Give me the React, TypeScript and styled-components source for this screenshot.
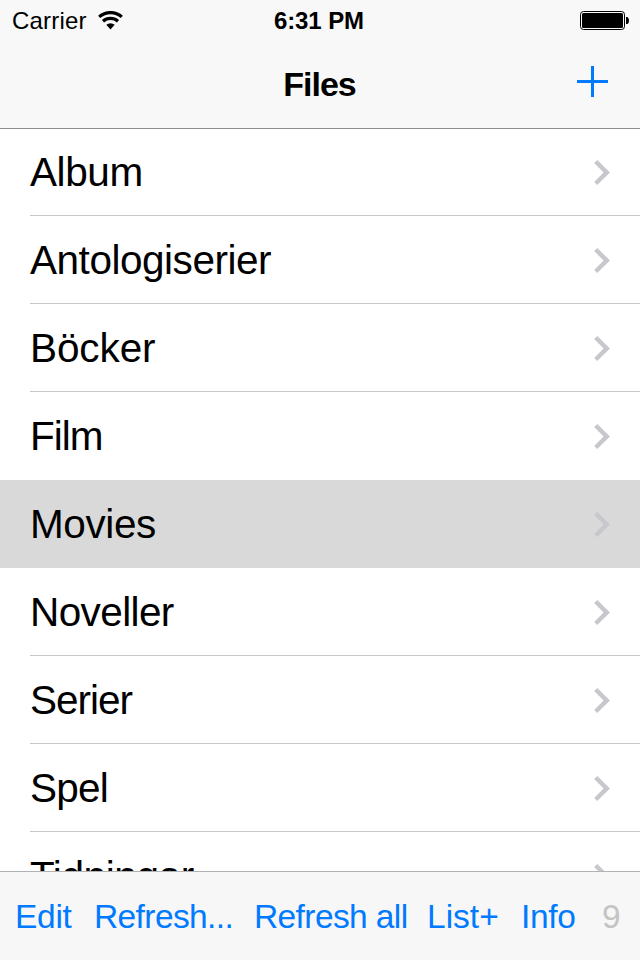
import React from "react";
import styled, { createGlobalStyle } from "styled-components";

const Global = createGlobalStyle`
  * { box-sizing: border-box; }
  body {
    margin: 0;
    background: #fff;
    color: #000;
    font-family: "Liberation Sans", Arial, sans-serif;
  }
`;

const Screen = styled.div`
  width: 640px;
  height: 960px;
  display: flex;
  flex-direction: column;
  background: #fff;
  overflow: hidden;
`;

/* The hairline overlaps the first pixel of the list. */
const Header = styled.header`
  position: relative;
  z-index: 1;
  flex: none;
  height: 129px;
  margin-bottom: -1px;
  background: #f8f8f8;
  border-bottom: 1px solid #8e8e8e;
`;

const StatusBar = styled.div`
  height: 40px;
  display: grid;
  grid-template-columns: 1fr auto 1fr;
  align-items: center;
  padding: 1px 11px 0 12px;
  font-size: 24px;
  line-height: 28px;
`;

const Carrier = styled.div`
  display: flex;
  align-items: center;
  gap: 11px;
  letter-spacing: 0.2px;
`;

const Time = styled.div`
  padding-right: 3px;
  font-weight: 700;
  letter-spacing: -0.1px;
`;

const BatterySlot = styled.div`
  display: flex;
  justify-content: flex-end;
`;

const Icon = styled.svg`
  display: block;
  flex: none;
`;

const NavBar = styled.nav`
  height: 88px;
  display: grid;
  grid-template-columns: 1fr auto 1fr;
  align-items: center;
  padding: 0 32px;
`;

const Title = styled.h1`
  grid-column: 2;
  margin: 0;
  padding-right: 1px;
  font-size: 34px;
  line-height: 40px;
  font-weight: 700;
  letter-spacing: -1px;
`;

const AddButton = styled.button`
  justify-self: end;
  margin-top: -5px;
  padding: 0;
  border: 0;
  background: none;
`;

const List = styled.ul`
  flex: 1;
  min-height: 0;
  margin: 0;
  padding: 0;
  overflow: hidden;
  list-style: none;
`;

const Row = styled.li<{ $selected: boolean }>`
  height: 88px;
  display: flex;
  padding-left: 30px;
  background: ${(p) => (p.$selected ? "#d9d9d9" : "#fff")};
`;

const RowContent = styled.div<{ $line: boolean }>`
  flex: 1;
  display: flex;
  align-items: center;
  justify-content: space-between;
  padding: 2px 29px 0 0;
  border-bottom: 1px solid ${(p) => (p.$line ? "#c8c7cc" : "transparent")};
`;

const RowLabel = styled.span<{ $tracking: number }>`
  margin-bottom: 1px;
  font-size: 40.5px;
  line-height: 46px;
  letter-spacing: ${(p) => p.$tracking}px;
  white-space: nowrap;
`;

const Toolbar = styled.footer`
  flex: none;
  height: 89px;
  display: grid;
  grid-template-columns: 79px 160px 173px 94px 81px 1fr;
  align-items: center;
  padding: 1px 0 0 15px;
  background: #f7f7f7;
  border-top: 1px solid #b2b2b2;
`;

const ToolButton = styled.button<{ $tracking: number }>`
  padding: 0;
  border: 0;
  background: none;
  color: #007aff;
  font: 33.5px/37px "Liberation Sans", Arial, sans-serif;
  letter-spacing: ${(p) => p.$tracking}px;
  text-align: left;
  white-space: nowrap;
`;

const Count = styled.span`
  color: #c4c4c4;
  font-size: 33.5px;
  line-height: 37px;
`;

const folders = [
  { name: "Album", tracking: -0.4 },
  { name: "Antologiserier", tracking: -0.47 },
  { name: "Böcker", tracking: -0.1 },
  { name: "Film", tracking: -1 },
  { name: "Movies", tracking: -0.4 },
  { name: "Noveller", tracking: -0.6 },
  { name: "Serier", tracking: -1 },
  { name: "Spel", tracking: -0.75 },
  { name: "Tidningar", tracking: -0.4 },
];

const actions = [
  { label: "Edit", tracking: -0.3 },
  { label: "Refresh...", tracking: -0.6 },
  { label: "Refresh all", tracking: -0.6 },
  { label: "List+", tracking: 0 },
  { label: "Info", tracking: -0.3 },
];

const selectedName = "Movies";

const WifiIcon = () => (
  <Icon width="25" height="19" viewBox="0 0 25 19" fill="none" stroke="#000" strokeWidth="3.2">
    <path d="M1.200 5.900a16.800 16.800 0 0 1 22.600 0" />
    <path d="M5 10.200a11.200 11.200 0 0 1 15 0" />
    <path d="M8.300 13.700q4.200-3 8.400 0L12.500 18.500Z" fill="#000" stroke="none" />
  </Icon>
);

const BatteryIcon = () => (
  <Icon width="49" height="19" viewBox="0 0 49 19">
    <rect x="0.5" y="0.5" width="44" height="18" rx="3" fill="none" stroke="#000" />
    <rect x="2" y="2" width="41" height="15" rx="1.500" />
    <path d="M46 6h1.500Q49 7 49 9.500T47.500 13H46Z" />
  </Icon>
);

const Chevron = () => (
  <Icon width="17" height="27" viewBox="0 0 17 27" fill="none" stroke="#c7c7cc" strokeWidth="4.500">
    <path d="M1.700 2.500 12.700 13.500 1.700 24.500" />
  </Icon>
);

export default function App() {
  return (
    <Screen>
      <Global />
      <Header>
        <StatusBar>
          <Carrier>
            Carrier
            <WifiIcon />
          </Carrier>
          <Time>6:31 PM</Time>
          <BatterySlot>
            <BatteryIcon />
          </BatterySlot>
        </StatusBar>
        <NavBar>
          <Title>Files</Title>
          <AddButton aria-label="Add">
            <Icon width="31" height="31" viewBox="0 0 31 31" stroke="#007aff" strokeWidth="3">
              <path d="M15.500 0v31M0 15.500h31" />
            </Icon>
          </AddButton>
        </NavBar>
      </Header>
      <List>
        {folders.map(({ name, tracking }, i) => (
          <Row key={name} $selected={name === selectedName}>
            <RowContent $line={name !== selectedName && folders[i + 1]?.name !== selectedName}>
              <RowLabel $tracking={tracking}>{name}</RowLabel>
              <Chevron />
            </RowContent>
          </Row>
        ))}
      </List>
      <Toolbar>
        {actions.map(({ label, tracking }) => (
          <ToolButton key={label} $tracking={tracking}>
            {label}
          </ToolButton>
        ))}
        <Count>9</Count>
      </Toolbar>
    </Screen>
  );
}
